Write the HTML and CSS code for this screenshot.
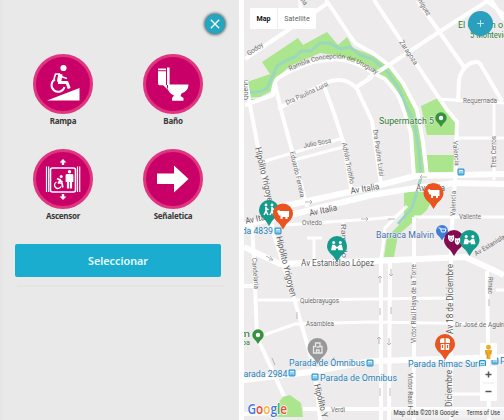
FILE: index.html
```html
<!DOCTYPE html>
<html lang="es">
<head>
<meta charset="utf-8">
<title>Mapa accesible</title>
<link rel="stylesheet" href="styles.css">
</head>
<body>
<main class="screens">
<section class="picker">
  <div class="picker-top">
    <button class="close" aria-label="Cerrar"><svg viewBox="0 0 20 20"><path d="M5.8 5.8l8.4 8.4M14.2 5.8l-8.4 8.4"/></svg></button>
  </div>
  <div class="options">
    <div class="option"><svg viewBox="0 0 60 60"><circle class="disc" cx="30" cy="30" r="28.5"/>
      <g class="solid"><circle cx="30.5" cy="14" r="3.1"/><path d="M14 46.5L46.5 34V46.5Z"/></g>
      <path class="line" stroke-width="4.2" d="M27.500 20L26 28"/><path class="line" stroke-width="3" d="M25 28.500H34L36.200 34.500"/><path class="line" stroke-width="1.7" d="M27 20H22.5L21 25M28 22.5L34 24.5"/>
      <path class="line" stroke-width="2" d="M22 25.4A6.6 6.6 0 1 0 31.5 33"/></svg><span>Rampa</span></div>
    <div class="option"><svg viewBox="0 0 60 60"><circle class="disc" cx="30" cy="30" r="28.5"/>
      <g class="solid"><path d="M15 14.500h8v1.800h-8zM15 17.200H23v14h-6.600q-1.400 0-1.400-1.400zM24 13.500h2.600V31H24z"/><path d="M24 30.500h21.500q0 6.500-7 9l-1 2.500 3 2v2.800H29V44l2-2.500q-5-2-7-8zM20 31l5 5v-5z"/></g></svg><span>Baño</span></div>
    <div class="option"><svg viewBox="0 0 60 60"><circle class="disc" cx="30" cy="30" r="28.5"/>
      <rect class="line" x="17.5" y="19" width="25" height="24" rx="2" stroke-width="1.6"/>
      <path class="line" stroke-width="1.2" d="M13.5 17.5V43M15.7 17.5V43M44.5 17.5V43M46.7 17.5V43"/>
      <g class="solid"><path d="M30 10l3.4 3.6h-2.2V16h-2.4v-2.4h-2.2zM30 51l3.4-3.6h-2.2V45h-2.4v2.4h-2.2z"/><circle cx="36.5" cy="22.8" r="1.7"/><path d="M34 25h5q1.400 0 1.400 1.400V33h-1.300v6.500h-2.200V33h-.8v6.500h-2.200V33h-1.300v-6.600Q32.600 25 34 25z"/><circle cx="28.2" cy="27.5" r="1.500"/></g>
      <path class="line" stroke-width="1.7" d="M27.5 30l-2 4h3.500l.8 4.500M27 31l-3-1.500M27 31.500l2.500 1.500"/><path class="line" stroke-width="1.3" d="M23.500 33a3.400 3.400 0 1 0 4.500 4.500"/></svg><span>Ascensor</span></div>
    <div class="option"><svg viewBox="0 0 60 60"><circle class="disc" cx="30" cy="30" r="28.5"/><path class="solid" d="M14 24.500H31V16.500L45.500 30 31 43.500V35H14Z"/></svg><span>Señaletica</span></div>
  </div>
  <button class="select">Seleccionar</button>
  <div class="rule"></div>
</section>

<section class="map">
<svg class="canvas" viewBox="244 0 260 420">
  <defs>
    <path id="rambla" d="M290 71Q320 56 343 59Q358 62 382 78"/>
    <g id="bus"><rect x="-2.900" y="-2.900" width="5.800" height="5.800" rx=".8" fill="#e5f3fb" stroke="#2795d1" stroke-width="1.200"/><path d="M-1.800 0h3.600M-1.800 1.700h3.600" stroke="#2795d1" stroke-width=".8"/></g>
    <path id="pin" d="M-10 0a10 10 0 1 1 20 0c0 5-4 8-6.500 10.500L0 16l-3.500-5.500C-6 8-10 5-10 0z"/>
    <g id="carry" class="white"><circle cx="-3.300" cy="-3.600" r="1.500"/><circle cx="3.300" cy="-3.600" r="1.500"/><path d="M-4.800-1.300h2.300L-.5.800h1L2.500-1.300h2.300L6 4.200H1.200V2.500h-2.400v1.700H-6z"/></g>
  </defs>
  <rect x="244" width="260" height="420" fill="#edebeb"/>
  <g fill="#abe58e">
    <path d="M262 62L298 38 303 45 327 32 338 45 347 37 353 48 374 56 390 67 403 83 417 110 424 150 426 177H415L412 135 402 105 385 80 370 66 340 56 320 53 290 66 276 78 271 91 260 97 247 98V82L270 74Z"/>
    <path d="M421 106L438 98 447 108 455 120V135H427ZM427 155H455V172H428ZM404 192H431V202L427 210 398 235 394 257H384L387 237 404 220ZM251 99H261L255 101H251ZM276 417L275 407 283 397 290 395 301 403 303 417Z"/>
  </g>
  <path class="stream" d="M248 92Q262 93 267 88L277 66 287 60 295 57 301 51 311 51 320 43 330 43 340 49 350 47 360 55 372 59 386 70 398 87 406 106 414 121 419 150 421 178 412 208 398 224"/>
  <g class="roads">
    <path d="M245 59L328 3M326 0L355 43 374 54 390 66 403 83 417 110 423 142 427 176M245 105L273 95Q273 82 278 78L290 71 313 62 335 59Q355 60 373 73L385 79Q399 94 402 105L411 133 414 177M374 0L447 110 457 122 455 180M417 0L464 67M458 102L459 80Q463 64 475 62Q479 61 482 67L502 101M368 78L389 65 439 32 489 0M491 0L504 20"/>
    <path d="M246 80L250 105 268 200 273 232 296 305 315 372 320 420M275 84L281 110 294 158 307 207M323 84L333 110 344 144 352 195M278 109L325 83Q345 75 357 89L372 121 381 184M355 88L372 77M303 26L300 0M244 414L275 413M303 409H504M252 226L254 260 257 337 284 396M244 286H257"/>
    <path class="thin" d="M438 99L504 103M457 138H504M494 103V180M262 162L343 138M294 160L343 147M258 300H295L450 298M264 335L295 324 372 322 493 324M307 238H322M314 238V262M343 222V262M285 225L372 219 395 217 403 210M414 217H504M484 0L504 14M451 394H484M407 206L385 228 381 260M504 290H496"/>
    <path d="M381 258V420M390 258L389 420M414 217V420M455 180L451 240V420M487 271L489 420"/>
    <path class="wide" d="M280 207L372 187 415 176 504 174M244 225L290 215 372 195 415 188 455 183 504 184M244 247L280 264 372 261 465 257 504 275M244 380L310 372 372 361 504 357"/>
  </g>
  <g class="arrows"><path d="M305 202h7m-2-2l2 2-2 2M420 177h7m-7 0l2-2m-2 2l2 2M266 256l7 4m-3-4l3 4h-4M361 219h7m-2-2l2 2-2 2M388 219h7M380 283v-7m-2 2l2-2 2 2M391 269v7m-2-2l2 2 2-2M380 308v7M391 307v7M379 344v-7m-2 2l2-2 2 2M389 338v7m-2-2l2 2 2-2M380 388v8M390 388v8M297 312v7M272 358l3 7M489 299v7"/></g>
  <g class="street">
    <text transform="translate(249 56) rotate(-35)" textLength="18">Godoy</text>
    <text><textPath href="#rambla" textLength="92">Rambla Concepción del Uruguay</textPath></text>
    <text transform="translate(287 105) rotate(-25)" textLength="46">Dra Paulina Luisi</text>
    <text transform="translate(399 42) rotate(56)" textLength="28">Zaragoza</text>
    <text transform="translate(414 -5) rotate(58)" textLength="25">Miníguez</text>
    <text transform="translate(298 -2) rotate(50)" textLength="10">Ana</text>
    <text x="463" y="103" textLength="34">Requernada</text>
    <text transform="translate(304 148) rotate(-11)" textLength="28">Julio Sosa</text>
    <text transform="translate(290 152) rotate(77)" textLength="47">Eduardo Ferreira</text>
    <text transform="translate(342 143) rotate(79)" textLength="42">Adrián Troitiño</text>
    <text transform="translate(373 130) rotate(82)" textLength="47">Dra Paulina Luisi</text>
    <text transform="translate(453 141) rotate(86)" textLength="25">Valencia</text>
    <text transform="translate(496 168) rotate(-90)" textLength="32">Tres Cerros</text>
    <text transform="translate(455 216) rotate(-88)" textLength="25">Valencia</text>
    <text transform="translate(248 100) rotate(-90)" textLength="20">Querin</text>
    <text x="459" y="219" textLength="22">Valiente</text>
    <text x="302" y="225" textLength="20">Oviedo</text>
    <text transform="translate(341 224) rotate(88)" textLength="34">Ramallo</text>
    <text transform="translate(252 258) rotate(86)" textLength="31">Candelaria</text>
    <text x="300" y="303" textLength="39">Quiebrayugos</text>
    <text x="306" y="326" textLength="28">Asamblea</text>
    <text x="331" y="412" textLength="14">Verdi</text>
    <text x="455" y="327" textLength="54">Dr José de Aguirre</text>
    <text transform="translate(416 343) rotate(-90)" textLength="79">Victor Raúl Haya de la Torre</text>
    <text transform="translate(408 373) rotate(90)" textLength="37">Victor Raúl H</text>
    <text transform="translate(488 277) rotate(90)" textLength="17">Rimac</text>
    <text transform="translate(476 256) rotate(-31)" textLength="43">Av Estanislao L</text>
  </g>
  <g class="avenue">
    <text transform="translate(310 216) rotate(-12)" textLength="28">Av Italia</text>
    <text transform="translate(351 194) rotate(-10)" textLength="29">Av Italia</text>
    <text transform="translate(246 224) rotate(-12)" textLength="28">Av Italia</text>
    <text transform="translate(416 191)" textLength="29">Av Italia</text>
    <text transform="translate(255 148) rotate(77)" textLength="60">Hipólito Yrigoyen</text>
    <text transform="translate(276 237) rotate(76)" textLength="62">Hipólito Yrigoyen</text>
    <text transform="translate(314 385) rotate(76)" textLength="34">Hipólito Y</text>
    <text x="301" y="266" textLength="73">Av Estanislao López</text>
    <text transform="translate(453 334) rotate(-90)" textLength="70">Av 18 de Diciembre</text>
    <text transform="translate(452 407) rotate(-90)" textLength="37">Diciembre</text>
  </g>
  <g class="place green">
    <text x="379" y="124" textLength="55">Supermatch 5</text>
    <text x="458" y="28" textLength="60">El Galpón o Fút</text><text x="470" y="38" textLength="46">5 Montevideo</text>
    <text x="240" y="337" textLength="10">m</text><text x="238" y="345" class="small" textLength="12">opa</text>
  </g>
  <g class="place blue">
    <text x="376" y="237.500" textLength="58" fill="#4870ad">Barraca Malvin</text>
    <text x="224" y="234" textLength="49">Parada 4839</text>
    <text x="289" y="366" textLength="76">Parada de Ómnibus</text><text x="238" y="376.500" textLength="49.500">Parada 2984</text>
    <text x="320" y="381" textLength="77">Parada de Omnibus</text><text x="408" y="367" textLength="70">Parada Rimac Sur</text><text x="500" y="364">P</text>
  </g>
  <use href="#bus" x="278" y="231"/><use href="#bus" x="461" y="172"/><use href="#bus" x="370" y="363"/><use href="#bus" x="292" y="373"/><use href="#bus" x="315" y="377"/><use href="#bus" x="482.500" y="363.500"/><use href="#bus" x="495" y="361"/>
  <g fill="#35933e"><use href="#pin" transform="translate(441 118) scale(.57)"/><use href="#pin" transform="translate(258 335) scale(.57)"/></g>
  <circle cx="441" cy="118" r="2.200" class="white"/><circle cx="258" cy="335" r="2.200" class="white"/>
  <use href="#pin" transform="translate(442 231) scale(.6)" fill="#3d7ed8"/><path d="M438.500 228h2l1 4h3.500l1-3h-5" fill="none" stroke="#fff"/>
  <g transform="translate(269 210)"><use href="#pin" fill="#159b8b"/><g class="white"><circle cx="-3" cy="-5" r="1.400"/><circle cx="3" cy="-5" r="1.400"/></g><path d="M-3-3v4l-2 4M-3 1l2 4M-3-2l2.500 2M3-3v4l-2 4M3 1l2 4M3-2l2.500 2" fill="none" stroke="#fff" stroke-width="1.600"/></g>
  <g fill="#e95420"><use href="#pin" x="283" y="213.500"/><use href="#pin" x="433.500" y="193"/><use href="#pin" x="445" y="344"/></g>
  <g class="white"><path id="cow" d="M277 211l2-1 1 1h9v6h-1.500v2h-2v-2h-3v2h-2v-3.500h-1.500z"/><use href="#cow" x="150.500" y="-21"/><path d="M440 340q0-2 5-2t5 2v4h-.8v6h-8.400v-6h-.8z"/></g>
  <path d="M445 338v12M440 343.500h10M442.500 345v3M447.500 345v3" stroke="#e95420" stroke-width="1.200"/>
  <use href="#pin" x="337" y="246" fill="#159b8b"/><use href="#carry" x="337" y="246"/>
  <use href="#pin" x="454" y="240" fill="#830b50"/><use href="#pin" x="469.500" y="240" fill="#159b8b"/><use href="#carry" x="469.500" y="240"/>
  <path class="white" d="M448 235q3 1.500 6 0 1 6-2.500 7-4-1-3.500-7zM455 238q2.500 1 5-.5 1 6-2.500 7.500-3.500-1-2.500-7z"/><path d="M449.500 238h1m1.500 0h1m-2.500 2h1.500M456 241h1m1 0h1" stroke="#830b50" stroke-width=".8"/>
  <use href="#pin" x="317.500" y="348" fill="#989898"/><path d="M313.500 353v-6.500h2V343h4.500v3.500h2v6.500zM316.500 353v-3h2.500v3M316.500 347h3" fill="none" stroke="#e7e7e7" stroke-width="1.300"/>
  <g class="google"><text x="247.500" y="413.500" textLength="39.500"><tspan fill="#4374e0">G</tspan><tspan fill="#e54b3c">o</tspan><tspan fill="#f4b92d">o</tspan><tspan fill="#4374e0">g</tspan><tspan fill="#37a454">l</tspan><tspan fill="#e54b3c">e</tspan></text></g>
  <rect x="392" y="409" width="112" height="9" fill="#f3f3f3" opacity=".75"/>
  <g class="credit"><text x="393.500" y="415" textLength="65">Map data ©2018 Google</text><text x="466.500" y="415" textLength="33.500">Terms of Use</text></g>
</svg>
<div class="types"><b>Map</b><span>Satellite</span></div>
<button class="add" aria-label="Agregar"><svg viewBox="0 0 26 26"><path d="M13 9.500v7M9.500 13h7"/></svg></button>
<div class="controls">
  <div class="person"><svg viewBox="0 0 16 16"><g fill="#efac24"><circle cx="8" cy="4" r="2.300"/><path d="M5 6.500h6v4.500H9.800v4H6.200v-4H5z"/></g><path d="M5 7l2 4v3M11 7l-2 3" stroke="#b9872d" fill="none" stroke-width=".7"/></svg></div>
  <div class="zoom"><svg viewBox="0 0 17 34"><path d="M5.500 8.500h6M8.500 5.500v6M5.500 25.500h6"/><path class="split" d="M3 17h11"/></svg></div>
</div>
</section>
</main>
<script src="labels.js"></script>
</body>
</html>
```

FILE: labels.js
```js
// Fit map labels to their lengths by scaling the glyphs as well as the gaps.
document.querySelectorAll("[textLength]").forEach(function (label) {
  label.setAttribute("lengthAdjust", "spacingAndGlyphs");
});
```

FILE: styles.css
```css
* { box-sizing: border-box; }
body { margin: 0; overflow: hidden; background: #fff; }
button { border: 0; padding: 0; font: inherit; }
svg { display: block; }
.screens { display: grid; grid-template-columns: 239px 260px; column-gap: 5px; height: 420px; }
.picker { background: #e9e9e9; border-left: 3px solid #e6e6e6; padding: 0 18px 0 11px; font-family: "Noto Sans", sans-serif; }
.picker-top { display: flex; justify-content: flex-end; padding: 14px 0 0; margin-right: -4px; height: 54px; }
.close { width: 20px; height: 20px; border-radius: 50%; background: #24a6c0; box-shadow: 0 0 3px 1px #536970; }
.close path { fill: none; stroke: #fff; stroke-width: 1.3; }
.options { display: grid; grid-template-columns: 60px 60px; column-gap: 50px; grid-auto-rows: 95px; margin-left: 19px; }
.option { text-align: center; font-size: 8px; line-height: 12px; font-weight: 700; color: #383838; letter-spacing: -.25px; }
.option svg { width: 60px; height: 60px; margin-bottom: 1px; }
.disc { fill: #c90068; stroke: #e0357f; stroke-width: 3; }
.solid, .white { fill: #fff; }
.line { fill: none; stroke: #fff; stroke-linejoin: round; }
.select { display: block; width: 206px; height: 33px; border-radius: 2px; background: #1aadcf; color: #e7fbff; font-size: 10.8px; font-weight: 600; margin-left: 1px; padding-bottom: 1px; }
.rule { height: 2px; background: #e4e4e4; margin: 8px -3px 0 3px; }
.map { position: relative; overflow: hidden; font-family: Roboto, sans-serif; }
.canvas { width: 260px; height: 420px; }
.stream { fill: none; stroke: #9bd7bd; stroke-width: 3; stroke-linejoin: round; }
.roads { fill: none; stroke: #fff; stroke-width: 4; stroke-linejoin: round; }
.roads .thin { stroke-width: 3; }
.roads .wide { stroke-width: 6; }
.arrows { fill: none; stroke: #a8a8a8; stroke-width: .8; }
.street { font-size: 6.8px; fill: #6c6c6c; }
.avenue { font-size: 8.8px; fill: #5c5c5c; }
.place { font-size: 9.2px; stroke: #f5f5f5; stroke-width: 1px; paint-order: stroke; }
.small { font-size: 7.5px; }
.green { fill: #2f7a35; }
.blue { fill: #2482ba; }
.google { font: 600 14.5px "Open Sans", sans-serif; stroke: #fff; stroke-width: 1.5px; paint-order: stroke; }
.credit { font-size: 6.5px; fill: #333; }
.types { position: absolute; left: 6px; top: 8px; width: 66px; height: 21px; display: flex; align-items: center; background: #fff; border-radius: 1px; font-size: 7.1px; color: #666; }
.types b { width: 27px; text-align: center; color: #111; }
.types span { flex: 1; text-align: center; line-height: 21px; border-left: 1px solid #eee; }
.add { position: absolute; left: 224px; top: 11px; width: 25px; height: 25px; border-radius: 50%; background: #2b9fbe; }
.add path { fill: none; stroke: #bfe8f3; stroke-width: 1; }
.controls { position: absolute; left: 236px; top: 343px; width: 17px; display: grid; gap: 6px; }
.person, .zoom { background: #fff; border-radius: 1px; }
.person { height: 17px; }
.zoom { height: 35px; }
.zoom path { stroke: #555; stroke-width: 1.5; }
.zoom .split { stroke: #ddd; stroke-width: .7; }
```
